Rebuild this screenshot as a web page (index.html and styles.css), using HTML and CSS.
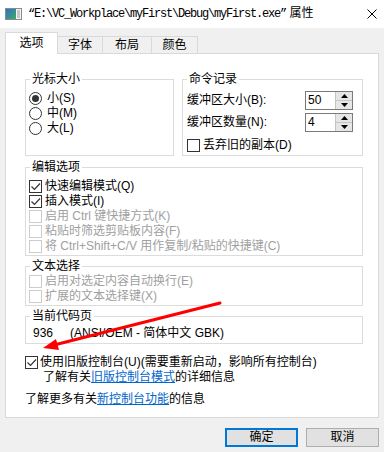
FILE: index.html
```html
<!DOCTYPE html>
<html lang="zh-CN">
<head>
    <meta charset="UTF-8">
    <title>属性</title>
    <link rel="stylesheet" href="styles.css">
</head>
<body>
    <div class="titlebar">
        <svg class="app-icon" width="17" height="12" viewBox="0 0 17 12">
            <defs>
                <linearGradient id="scr" x1="0" y1="0" x2="1" y2="1">
                    <stop offset="0" stop-color="#2f6fd0"/>
                    <stop offset="1" stop-color="#3cae5a"/>
                </linearGradient>
            </defs>
            <rect x="0.5" y="0.5" width="16" height="11" fill="#f4f4f4" stroke="#8a8a8a"/>
            <rect x="1" y="1" width="10" height="10" fill="url(#scr)"/>
            <rect x="12" y="2" width="3" height="8" fill="#c8c8c8"/>
        </svg>
        <span class="title"><span class="path">“E:\VC_Workplace\myFirst\Debug\myFirst.exe”</span> 属性</span>
        <svg class="close" width="10" height="10" viewBox="0 0 10 10">
            <path d="M0.5 0.5 L9.5 9.5 M9.5 0.5 L0.5 9.5" stroke="#000" stroke-width="1"/>
        </svg>
    </div>

    <div class="dialog">
        <div class="tabs">
            <div class="tab active" style="width:53px">选项</div>
            <div class="tab" style="width:46px">字体</div>
            <div class="tab" style="width:50px">布局</div>
            <div class="tab" style="width:47px">颜色</div>
        </div>

        <div class="panel">
            <div class="top-row">
                <div class="group cursor">
                    <span class="legend">光标大小</span>
                    <div class="opt"><span class="radio on"></span>小(S)</div>
                    <div class="opt"><span class="radio"></span>中(M)</div>
                    <div class="opt"><span class="radio"></span>大(L)</div>
                </div>
                <div class="group history">
                    <span class="legend">命令记录</span>
                    <div class="field">
                        <span>缓冲区大小(B):</span>
                        <div class="spin">
                            <span class="spin-val">50</span>
                            <span class="spin-btns">
                                <span class="spin-btn"><svg width="7" height="4"><path d="M0 4 L3.5 0 L7 4 Z" fill="#000"/></svg></span>
                                <span class="spin-btn"><svg width="7" height="4"><path d="M0 0 L3.5 4 L7 0 Z" fill="#000"/></svg></span>
                            </span>
                        </div>
                    </div>
                    <div class="field">
                        <span>缓冲区数量(N):</span>
                        <div class="spin">
                            <span class="spin-val">4</span>
                            <span class="spin-btns">
                                <span class="spin-btn"><svg width="7" height="4"><path d="M0 4 L3.5 0 L7 4 Z" fill="#000"/></svg></span>
                                <span class="spin-btn"><svg width="7" height="4"><path d="M0 0 L3.5 4 L7 0 Z" fill="#000"/></svg></span>
                            </span>
                        </div>
                    </div>
                    <div class="opt discard"><span class="check"></span>丢弃旧的副本(D)</div>
                </div>
            </div>

            <div class="group edit">
                <span class="legend">编辑选项</span>
                <div class="opt"><span class="check"><svg width="11" height="11"><path d="M1.5 5.5 L4.5 8.5 L10 2.5" fill="none" stroke="#333" stroke-width="1.2"/></svg></span>快速编辑模式(Q)</div>
                <div class="opt"><span class="check"><svg width="11" height="11"><path d="M1.5 5.5 L4.5 8.5 L10 2.5" fill="none" stroke="#333" stroke-width="1.2"/></svg></span>插入模式(I)</div>
                <div class="opt off"><span class="check"></span>启用 Ctrl 键快捷方式(K)</div>
                <div class="opt off"><span class="check"></span>粘贴时筛选剪贴板内容(F)</div>
                <div class="opt off"><span class="check"></span>将 Ctrl+Shift+C/V 用作复制/粘贴的快捷键(C)</div>
            </div>

            <div class="group textsel">
                <span class="legend">文本选择</span>
                <div class="opt off"><span class="check"></span>启用对选定内容自动换行(E)</div>
                <div class="opt off"><span class="check"></span>扩展的文本选择键(X)</div>
            </div>

            <div class="group codepage">
                <span class="legend">当前代码页</span>
                936<span class="cp">(ANSI/OEM - 简体中文 GBK)</span>
            </div>

            <div class="opt legacy"><span class="check"><svg width="11" height="11"><path d="M1.5 5.5 L4.5 8.5 L10 2.5" fill="none" stroke="#333" stroke-width="1.2"/></svg></span>使用旧版控制台(U)(需要重新启动，影响所有控制台)</div>
            <div class="legacy-more">了解有关<a href="#">旧版控制台模式</a>的详细信息</div>
            <div class="more">了解更多有关<a href="#">新控制台功能</a>的信息</div>
        </div>

        <div class="buttons">
            <button class="btn default">确定</button>
            <button class="btn">取消</button>
        </div>
    </div>

    <!-- red annotation arrow drawn over the dialog -->
    <svg class="annotation" width="384" height="452" viewBox="0 0 384 452">
        <line x1="220" y1="303" x2="56" y2="344.5" stroke="#f00" stroke-width="3" stroke-linecap="round"/>
        <polygon points="43,348 59,350 56,339" fill="#f00"/>
    </svg>
</body>
</html>
```

FILE: styles.css
```css
body {
    margin: 0;
    width: 384px;
    height: 452px;
    background-color: #f0f0f0;
    font-family: "Liberation Sans", "Noto Sans CJK SC", sans-serif;
    font-size: 12px;
    line-height: 15px;
    color: #000;
    position: relative;
    overflow: hidden;
}
.titlebar {
    height: 28px;
    background-color: #fff;
    display: flex;
    align-items: center;
}
.app-icon {
    margin-left: 5px;
}
.title {
    margin-left: 6px;
    flex: 1;
    white-space: nowrap;
}
.path {
    font-family: "Liberation Mono", monospace;
    letter-spacing: -1.2px;
}
.close {
    margin-right: 7px;
}
.dialog {
    padding: 4px 5px 0;
}
.tabs {
    display: flex;
    align-items: flex-end;
    height: 21px;
}
.tab {
    height: 17px;
    box-sizing: border-box;
    border: 1px solid #d9d9d9;
    border-bottom: none;
    background-color: #f0f0f0;
    margin-left: -1px;
    text-align: center;
    line-height: 16px;
}
.tab.active {
    margin-left: 0;
    height: 22px;
    margin-bottom: -1px;
    background-color: #fff;
    line-height: 20px;
    position: relative;
    z-index: 1;
}
.panel {
    background-color: #fff;
    border: 1px solid #d9d9d9;
    height: 365px;
    box-sizing: border-box;
    padding: 25px 15px 0 19px;
}
.top-row {
    display: flex;
    gap: 8px;
}
.group {
    position: relative;
    border: 1px solid #dcdcdc;
    box-sizing: border-box;
}
.legend {
    position: absolute;
    top: -9px;
    left: 4px;
    padding: 0 2px;
    background-color: #fff;
    line-height: 16px;
}
.opt {
    display: flex;
    align-items: center;
    height: 15px;
    line-height: 15px;
    white-space: nowrap;
}
.opt.off {
    color: #a0a0a0;
}
.radio {
    width: 13px;
    height: 13px;
    box-sizing: border-box;
    border: 1px solid #333;
    border-radius: 50%;
    margin-right: 5px;
    display: flex;
    align-items: center;
    justify-content: center;
}
.radio.on::after {
    content: "";
    width: 7px;
    height: 7px;
    border-radius: 50%;
    background-color: #333;
}
.check {
    width: 13px;
    height: 13px;
    box-sizing: border-box;
    border: 1px solid #333;
    background-color: #fff;
    margin-right: 3px;
    display: flex;
    align-items: center;
    justify-content: center;
}
.opt.off .check {
    border-color: #cccccc;
}
.cursor {
    width: 149px;
    height: 77px;
    padding: 11px 0 0 3px;
}
.history {
    flex: 1;
    height: 77px;
    padding: 11px 9px 0 4px;
}
.field {
    display: flex;
    align-items: center;
    justify-content: space-between;
    height: 19px;
}
.field + .field {
    margin-top: 3px;
}
.spin {
    width: 48px;
    height: 19px;
    box-sizing: border-box;
    border: 1px solid #7a7a7a;
    display: flex;
}
.spin-val {
    flex: 1;
    padding-left: 2px;
    line-height: 17px;
}
.spin-btns {
    width: 16px;
    display: flex;
    flex-direction: column;
    border-left: 1px solid #c4c4c4;
}
.spin-btn {
    flex: 1;
    background-color: #e6e6e6;
    display: flex;
    align-items: center;
    justify-content: center;
}
.spin-btn + .spin-btn {
    border-top: 1px solid #c4c4c4;
}
.discard {
    margin-top: 6px;
}
.edit {
    margin-top: 11px;
    padding: 11px 0 1px 3px;
}
.textsel {
    margin-top: 10px;
    padding: 7px 0 1px 3px;
}
.codepage {
    margin-top: 10px;
    padding: 8px 0 2px 7px;
    line-height: 16px;
}
.cp {
    margin-left: 17px;
}
.legacy {
    margin-top: 11px;
}
.legacy .check {
    margin-right: 2px;
}
.legacy-more {
    padding-left: 18px;
}
.more {
    margin-top: 7px;
}
a {
    color: #0066cc;
    text-decoration: underline;
}
.buttons {
    display: flex;
    justify-content: flex-end;
    gap: 8px;
    margin-top: 10px;
}
.btn {
    width: 73px;
    height: 19px;
    box-sizing: border-box;
    border: 1px solid #adadad;
    background-color: #e1e1e1;
    font-family: inherit;
    font-size: 12px;
    line-height: 15px;
    padding: 0;
}
.btn.default {
    border: 2px solid #0078d7;
}
.annotation {
    position: absolute;
    left: 0;
    top: 0;
    pointer-events: none;
}
```
